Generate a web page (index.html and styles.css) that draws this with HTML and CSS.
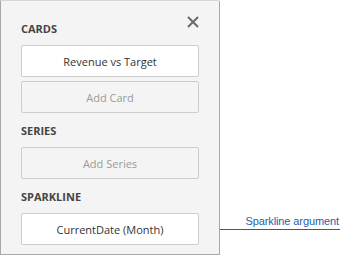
FILE: index.html
```html
<!DOCTYPE html>
<html lang="en">
<head>
<meta charset="UTF-8">
<title>Sparkline bindings</title>
<link rel="stylesheet" href="styles.css">
</head>
<body>

<div class="stage">
  <div class="panel">
    <button class="close" title="Close">
      <svg width="12" height="12" viewBox="0 0 12 12"><path d="M1 1L11 11M11 1L1 11" stroke="#6b6b6b" stroke-width="2" fill="none"/></svg>
    </button>

    <div class="section">
      <div class="section-title">Cards</div>
      <div class="item">Revenue vs Target</div>
      <div class="item placeholder">Add Card</div>
    </div>

    <div class="section">
      <div class="section-title">Series</div>
      <div class="item placeholder">Add Series</div>
    </div>

    <div class="section">
      <div class="section-title">Sparkline</div>
      <div class="item" id="sparklineArg">CurrentDate (Month)</div>
    </div>
  </div>

  <div class="callout">
    <span>Sparkline argument</span>
  </div>
</div>

</body>
</html>
```

FILE: styles.css
```css
body { margin: 0; background: #fff; font-family: "Segoe UI", "Open Sans", "Noto Sans", sans-serif; }
.stage { display: flex; align-items: flex-start; width: 340px; height: 256px; }
.panel { position: relative; box-sizing: border-box; width: 220px; height: 255px; background: #f4f4f4; border: 1px solid #a8a8a8; border-top-color: #d6d6d6; border-radius: 0 2px 0 0; padding: 20px 20px 0 20px; }
.close { position: absolute; top: 15px; right: 20px; background: none; border: none; padding: 0; width: 12px; height: 12px; cursor: pointer; display: flex; }
.section { display: flex; flex-direction: column; gap: 4px; margin-bottom: 10px; }
.section-title { font-size: 11px; font-weight: bold; color: #454545; text-transform: uppercase; line-height: 16px; margin-bottom: 4px; }
.item { box-sizing: border-box; height: 32px; background: #fff; border: 1px solid #cdcdcd; border-radius: 2px; display: flex; align-items: center; justify-content: center; font-size: 11px; color: #333; }
.item.placeholder { background: #f4f4f4; color: #9a9a9a; }
.callout { flex: 1; margin-top: 213px; height: 16px; border-bottom: 1px solid #1f5ea8; display: flex; justify-content: flex-end; align-items: flex-end; }
.callout span { font-family: "Liberation Sans", Arial, sans-serif; font-size: 11px; color: #1f5ea8; line-height: 13px; padding-right: 1px; padding-bottom: 1px; letter-spacing: -0.1px; }
```
